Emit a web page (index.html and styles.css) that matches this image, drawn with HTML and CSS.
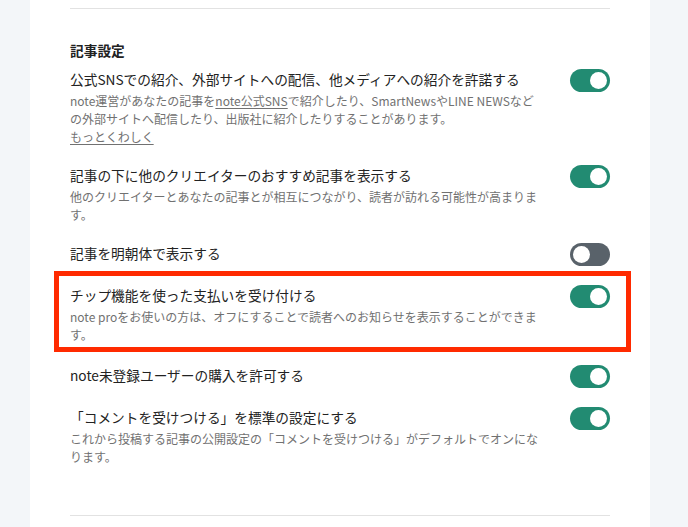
FILE: index.html
```html
<!DOCTYPE html>
<html lang="ja">
<head>
<meta charset="utf-8">
<link rel="stylesheet" href="styles.css">
</head>
<body>
<div class="panel">
  <hr class="divider">
  <section class="section">
    <h2 class="heading">記事設定</h2>
    <div class="rows">
      <div class="row">
        <div class="text">
          <div class="title">公式SNSでの紹介、外部サイトへの配信、他メディアへの紹介を許諾する</div>
          <p class="desc">note運営があなたの記事を<a class="link" href="#">note公式SNS</a>で紹介したり、SmartNewsやLINE NEWSなどの外部サイトへ配信したり、出版社に紹介したりすることがあります。<br><a class="link" href="#">もっとくわしく</a></p>
        </div>
        <span class="toggle on"></span>
      </div>
      <div class="row">
        <div class="text">
          <div class="title">記事の下に他のクリエイターのおすすめ記事を表示する</div>
          <p class="desc">他のクリエイターとあなたの記事とが相互につながり、読者が訪れる可能性が高まります。</p>
        </div>
        <span class="toggle on"></span>
      </div>
      <div class="row">
        <div class="text">
          <div class="title">記事を明朝体で表示する</div>
        </div>
        <span class="toggle off"></span>
      </div>
      <div class="row highlighted">
        <div class="text">
          <div class="title">チップ機能を使った支払いを受け付ける</div>
          <p class="desc">note proをお使いの方は、オフにすることで読者へのお知らせを表示することができます。</p>
        </div>
        <span class="toggle on"></span>
      </div>
      <div class="row">
        <div class="text">
          <div class="title">note未登録ユーザーの購入を許可する</div>
        </div>
        <span class="toggle on"></span>
      </div>
      <div class="row">
        <div class="text">
          <div class="title">「コメントを受けつける」を標準の設定にする</div>
          <p class="desc">これから投稿する記事の公開設定の「コメントを受けつける」がデフォルトでオンになります。</p>
        </div>
        <span class="toggle on"></span>
      </div>
    </div>
  </section>
  <hr class="divider bottom">
</div>
</body>
</html>
```

FILE: styles.css
```css
html, body {
  margin: 0;
  padding: 0;
  height: 100%;
}
body {
  background: #f3f6f9;
  font-family: "Noto Sans CJK JP", "Noto Sans", sans-serif;
  color: #222;
  overflow: hidden;
}
.panel {
  margin-left: 30px;
  width: 620px;
  min-height: 100%;
  background: #fff;
  padding: 8px 40px 0;
  box-sizing: border-box;
}
.divider {
  margin: 0;
  border: 0;
  border-top: 1px solid #e2e2e2;
}
.divider.bottom {
  margin-top: 49px;
}
.section {
  padding-top: 33px;
}
.heading {
  margin: 0 0 10px;
  font-size: 13.7px;
  line-height: 16px;
  font-weight: 700;
  color: #222;
}
.rows {
  display: flex;
  flex-direction: column;
  gap: 18px;
}
.row {
  display: flex;
  justify-content: space-between;
  align-items: flex-start;
}
.text {
  width: 472px;
}
.title {
  font-size: 13.7px;
  line-height: 22px;
  color: #222;
}
.desc {
  margin: 2px 0 0;
  font-size: 12px;
  line-height: 18px;
  color: #717171;
}
.link {
  color: #717171;
  text-decoration: underline;
  text-underline-offset: 2px;
}
.toggle {
  position: relative;
  flex: none;
  width: 40px;
  height: 23px;
  margin-top: 1px;
  border-radius: 12px;
  background: #228b72;
}
.toggle::after {
  content: "";
  position: absolute;
  top: 3px;
  width: 17px;
  height: 17px;
  border-radius: 50%;
  background: #fff;
}
.toggle.on::after {
  right: 3px;
}
.toggle.off {
  background: #59626a;
}
.toggle.off::after {
  left: 3px;
}
.highlighted {
  position: relative;
  margin-bottom: 2px;
}
.highlighted::after {
  content: "";
  position: absolute;
  top: -13px;
  left: -16px;
  right: -21px;
  bottom: -8px;
  border: 5px solid #ff2a00;
  pointer-events: none;
}
```
